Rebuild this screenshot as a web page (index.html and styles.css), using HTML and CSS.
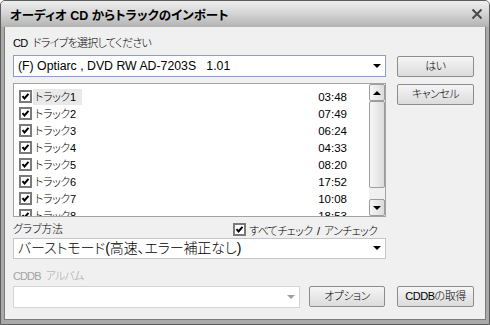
FILE: index.html
```html
<html>
	<head>
		<meta charset="utf-8">
		<link rel="stylesheet" href="styles.css">
	</head>
	<body>
		<div class="wnd">
			<div class="titleBar">
				<span class="titleTxt">オーディオ CD からトラックのインポート</span>
				<svg class="closeBtn" width="12" height="12" viewBox="0 0 12 12"><path d="M1.5 1.5 L10.5 10.5 M10.5 1.5 L1.5 10.5" stroke="#4a4a4a" stroke-width="2" fill="none"/></svg>
			</div>
			<div class="frame">
				<div class="dlg">
					<div class="lbl">CD ドライブを選択してください</div>
					<div class="row r1">
						<div class="combo comboDrive">(F) Optiarc , DVD RW AD-7203S &nbsp; 1.01<span class="arrow"></span></div>
						<div class="btn">はい</div>
					</div>
					<div class="row r2">
						<div class="listBox">
							<div class="items">
								<div class="item"><svg class="chk" width="13" height="13" viewBox="0 0 13 13"><rect x="1" y="1" width="11" height="11" fill="#fff" stroke="#7a7a7a" stroke-width="2"/><path d="M3.5 6.2 L5.5 8.5 L9.5 3.8" stroke="#000" stroke-width="2" fill="none"/></svg><span class="tName sel">トラック1</span><span class="tTime">03:48</span></div>
								<div class="item"><svg class="chk" width="13" height="13" viewBox="0 0 13 13"><rect x="1" y="1" width="11" height="11" fill="#fff" stroke="#7a7a7a" stroke-width="2"/><path d="M3.5 6.2 L5.5 8.5 L9.5 3.8" stroke="#000" stroke-width="2" fill="none"/></svg><span class="tName">トラック2</span><span class="tTime">07:49</span></div>
								<div class="item"><svg class="chk" width="13" height="13" viewBox="0 0 13 13"><rect x="1" y="1" width="11" height="11" fill="#fff" stroke="#7a7a7a" stroke-width="2"/><path d="M3.5 6.2 L5.5 8.5 L9.5 3.8" stroke="#000" stroke-width="2" fill="none"/></svg><span class="tName">トラック3</span><span class="tTime">06:24</span></div>
								<div class="item"><svg class="chk" width="13" height="13" viewBox="0 0 13 13"><rect x="1" y="1" width="11" height="11" fill="#fff" stroke="#7a7a7a" stroke-width="2"/><path d="M3.5 6.2 L5.5 8.5 L9.5 3.8" stroke="#000" stroke-width="2" fill="none"/></svg><span class="tName">トラック4</span><span class="tTime">04:33</span></div>
								<div class="item"><svg class="chk" width="13" height="13" viewBox="0 0 13 13"><rect x="1" y="1" width="11" height="11" fill="#fff" stroke="#7a7a7a" stroke-width="2"/><path d="M3.5 6.2 L5.5 8.5 L9.5 3.8" stroke="#000" stroke-width="2" fill="none"/></svg><span class="tName">トラック5</span><span class="tTime">08:20</span></div>
								<div class="item"><svg class="chk" width="13" height="13" viewBox="0 0 13 13"><rect x="1" y="1" width="11" height="11" fill="#fff" stroke="#7a7a7a" stroke-width="2"/><path d="M3.5 6.2 L5.5 8.5 L9.5 3.8" stroke="#000" stroke-width="2" fill="none"/></svg><span class="tName">トラック6</span><span class="tTime">17:52</span></div>
								<div class="item"><svg class="chk" width="13" height="13" viewBox="0 0 13 13"><rect x="1" y="1" width="11" height="11" fill="#fff" stroke="#7a7a7a" stroke-width="2"/><path d="M3.5 6.2 L5.5 8.5 L9.5 3.8" stroke="#000" stroke-width="2" fill="none"/></svg><span class="tName">トラック7</span><span class="tTime">10:08</span></div>
								<div class="item"><svg class="chk" width="13" height="13" viewBox="0 0 13 13"><rect x="1" y="1" width="11" height="11" fill="#fff" stroke="#7a7a7a" stroke-width="2"/><path d="M3.5 6.2 L5.5 8.5 L9.5 3.8" stroke="#000" stroke-width="2" fill="none"/></svg><span class="tName">トラック8</span><span class="tTime">18:53</span></div>
							</div>
							<div class="vScroll">
								<div class="sbBtn"><span class="upArr"></span></div>
								<div class="sbThumb"></div>
								<div class="sbTrack"></div>
								<div class="sbBtn"><span class="dnArr"></span></div>
							</div>
						</div>
						<div class="btn">キャンセル</div>
					</div>
					<div class="row r3">
						<span class="lbl grabLbl">グラブ方法</span>
						<span class="chkAll"><svg class="chk" width="13" height="13" viewBox="0 0 13 13"><rect x="1" y="1" width="11" height="11" fill="#fff" stroke="#7a7a7a" stroke-width="2"/><path d="M3.5 6.2 L5.5 8.5 L9.5 3.8" stroke="#000" stroke-width="2" fill="none"/></svg>すべてチェック / アンチェック</span>
					</div>
					<div class="combo comboGrab">バーストモード(高速、エラー補正なし)<span class="arrow"></span></div>
					<div class="lbl dis">CDDB アルバム</div>
					<div class="row r4">
						<div class="combo comboDis"><span class="arrow disArr"></span></div>
						<div class="btn btnOpt">オプション</div>
						<div class="btn">CDDBの取得</div>
					</div>
				</div>
			</div>
		</div>
	</body>
</html>
```

FILE: styles.css
```css
body {
	margin: 0;
	font-family: "Liberation Sans", "Noto Sans CJK JP", sans-serif;
	font-size: 11px;
	font-weight: 300;
	color: #000;
	background: #fff;
}

.wnd {
	width: 490px;
	height: 325px;
	box-sizing: border-box;
	border: 1px solid #5c5c5c;
	border-radius: 5px 5px 0 0;
	display: flex;
	flex-direction: column;
	overflow: hidden;
	background: #a9a9a9;
}

.titleBar {
	height: 26px;
	flex-shrink: 0;
	display: flex;
	align-items: center;
	padding: 0 6px 0 9px;
	background: linear-gradient(#efefef, #d6d6d6 45%, #b3b3b3);
}
.titleTxt {
	font-weight: bold;
	font-size: 12.5px;
	font-feature-settings: "palt";
	flex: 1;
}
.closeBtn {
	display: block;
}

.frame {
	flex: 1;
	display: flex;
	padding: 0 3px 4px 3px;
}
.dlg {
	flex: 1;
	border: 1px solid #7c7c7c;
	border-top: none;
	background: #f0f0f0;
	padding: 9px 11px 0 8px;
}

.lbl {
	height: 15px;
	line-height: 15px;
	letter-spacing: -0.7px;
	word-spacing: 3px;
	font-feature-settings: "palt";
}
.dis {
	color: #a3a3a3;
	margin-top: 10px;
	letter-spacing: -0.9px;
}

.row {
	display: flex;
	align-items: flex-start;
}
.r1 { margin-top: 4px; }
.r2 { margin-top: 6px; }
.r3 {
	margin-top: 4px;
	height: 17px;
	align-items: center;
}
.r4 { margin-top: 2px; }

.combo {
	position: relative;
	width: 373px;
	height: 22px;
	box-sizing: border-box;
	border: 1px solid #c6c6c6;
	background: #fff;
	font-size: 12.3px;
	line-height: 20px;
	padding-left: 4px;
	font-feature-settings: "palt";
	white-space: nowrap;
}
.comboDrive {
	border-color: #8a9fc2;
}
.comboGrab {
	height: 21px;
	margin-top: 0;
	font-size: 14px;
	line-height: 19px;
	letter-spacing: -0.1px;
}
.comboDis {
	width: 287px;
	border-color: #d4d4d4;
}
.arrow {
	position: absolute;
	right: 4px;
	top: 8px;
	width: 0;
	height: 0;
	border-left: 4px solid transparent;
	border-right: 4px solid transparent;
	border-top: 4px solid #000;
}
.comboGrab .arrow {
	top: 7px;
}
.disArr {
	border-top-color: #a0a0a0;
}

.btn {
	width: 77px;
	height: 21px;
	box-sizing: border-box;
	margin-left: 11px;
	margin-top: 1px;
	border: 1px solid #8c8c8c;
	border-radius: 2px;
	background: linear-gradient(#f6f6f6, #e8e8e8 50%, #dcdcdc);
	text-align: center;
	line-height: 19px;
	letter-spacing: -0.5px;
	font-feature-settings: "palt";
}
.r4 .btn {
	margin-top: 0;
	margin-left: 12px;
}
.r4 .btnOpt {
	width: 76px;
	margin-left: 9px;
}

.listBox {
	width: 373px;
	height: 134px;
	box-sizing: border-box;
	border: 1px solid #a3a3a3;
	background: #fff;
	display: flex;
}
.items {
	flex: 1;
	overflow: hidden;
	padding: 4px 22px 0 5px;
}
.item {
	height: 17px;
	display: flex;
	align-items: center;
}
.chk {
	display: block;
	flex-shrink: 0;
}
.tName {
	margin-left: 1px;
	padding: 0 2px;
	line-height: 16px;
	font-size: 11px;
	letter-spacing: -0.4px;
	font-feature-settings: "palt";
}
.sel {
	background: #e9e9e9;
	padding-right: 6px;
}
.tTime {
	margin-left: auto;
	font-size: 11.5px;
}

.vScroll {
	width: 16px;
	display: flex;
	flex-direction: column;
	background: #f0f0f0;
}
.sbBtn, .sbThumb {
	box-sizing: border-box;
	border: 1px solid #9d9d9d;
	border-radius: 2px;
	background: linear-gradient(to right, #f6f6f6, #dcdcdc);
}
.sbBtn {
	height: 17px;
	display: flex;
	align-items: center;
	justify-content: center;
}
.sbThumb {
	height: 87px;
}
.sbTrack {
	flex: 1;
}
.upArr {
	width: 0;
	height: 0;
	border-left: 4px solid transparent;
	border-right: 4px solid transparent;
	border-bottom: 4px solid #000;
}
.dnArr {
	width: 0;
	height: 0;
	border-left: 4px solid transparent;
	border-right: 4px solid transparent;
	border-top: 4px solid #000;
}

.grabLbl {
	width: 220px;
	letter-spacing: -0.3px;
}
.chkAll {
	display: flex;
	align-items: center;
	letter-spacing: -0.6px;
	word-spacing: 2px;
	white-space: pre;
	font-feature-settings: "palt";
}
.chkAll .chk {
	margin-right: 3px;
}
```
